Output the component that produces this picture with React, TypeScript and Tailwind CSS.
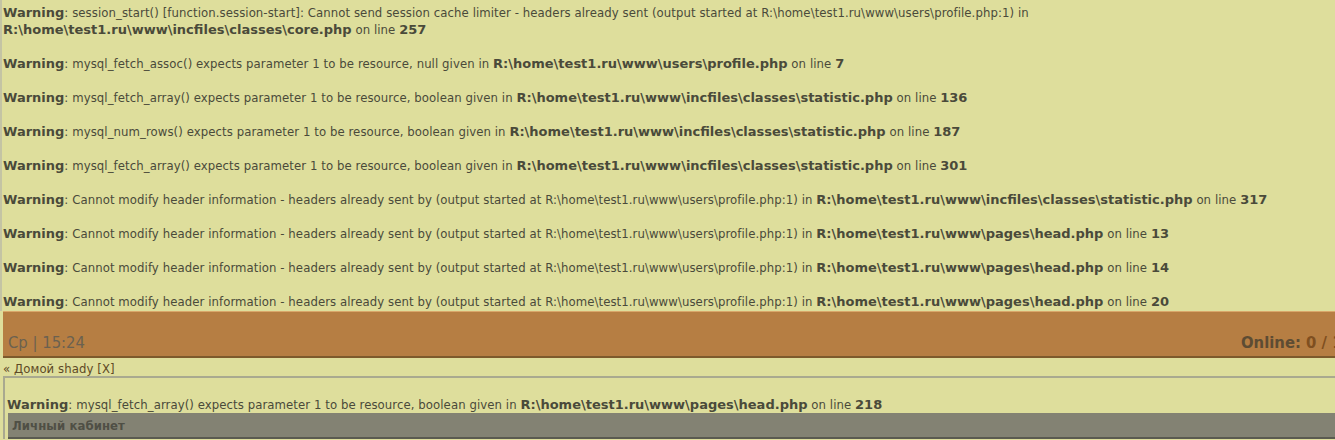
import React from "react";

type W = { msg: string; file: string; line: string };

const warnings: W[] = [
  { msg: "mysql_fetch_assoc() expects parameter 1 to be resource, null given in ", file: "R:\\home\\test1.ru\\www\\users\\profile.php", line: "7" },
  { msg: "mysql_fetch_array() expects parameter 1 to be resource, boolean given in ", file: "R:\\home\\test1.ru\\www\\incfiles\\classes\\statistic.php", line: "136" },
  { msg: "mysql_num_rows() expects parameter 1 to be resource, boolean given in ", file: "R:\\home\\test1.ru\\www\\incfiles\\classes\\statistic.php", line: "187" },
  { msg: "mysql_fetch_array() expects parameter 1 to be resource, boolean given in ", file: "R:\\home\\test1.ru\\www\\incfiles\\classes\\statistic.php", line: "301" },
  { msg: "Cannot modify header information - headers already sent by (output started at R:\\home\\test1.ru\\www\\users\\profile.php:1) in ", file: "R:\\home\\test1.ru\\www\\incfiles\\classes\\statistic.php", line: "317" },
  { msg: "Cannot modify header information - headers already sent by (output started at R:\\home\\test1.ru\\www\\users\\profile.php:1) in ", file: "R:\\home\\test1.ru\\www\\pages\\head.php", line: "13" },
  { msg: "Cannot modify header information - headers already sent by (output started at R:\\home\\test1.ru\\www\\users\\profile.php:1) in ", file: "R:\\home\\test1.ru\\www\\pages\\head.php", line: "14" },
  { msg: "Cannot modify header information - headers already sent by (output started at R:\\home\\test1.ru\\www\\users\\profile.php:1) in ", file: "R:\\home\\test1.ru\\www\\pages\\head.php", line: "20" },
];

const boldFont = { fontFamily: '"DejaVu Sans", sans-serif' };

function B({ children }: { children: React.ReactNode }) {
  return (
    <b className="font-bold tracking-normal" style={boldFont}>
      {children}
    </b>
  );
}

function Warn({ w }: { w: W }) {
  return (
    <div className="whitespace-nowrap">
      <B>Warning</B>: {w.msg}
      <B>{w.file}</B> on line <B>{w.line}</B>
    </div>
  );
}

export default function App() {
  return (
    <div
      className="min-h-[440px] w-[1335px] overflow-hidden bg-[#dede9c] text-[13px] leading-[17px] tracking-[0.08px] text-[#4a4a3a]"
      style={{ fontFamily: '"DejaVu Sans Condensed", "DejaVu Sans", sans-serif' }}
    >
      <div className="border-l-2 border-[#c4c4a4] pl-[1px] pt-[4px] pb-[1px]">
        <div>
          <B>Warning</B>: session_start() [function.session-start]: Cannot send session cache limiter - headers already sent (output started at R:\home\test1.ru\www\users\profile.php:1) in
          <br />
          <B>R:\home\test1.ru\www\incfiles\classes\core.php</B> on line <B>257</B>
        </div>
        {warnings.map((w, i) => (
          <div key={i} className="mt-[17px]">
            <Warn w={w} />
          </div>
        ))}
      </div>
      <div className="ml-[3px] flex h-[47px] items-end justify-between overflow-hidden border-t border-b-2 border-t-[#d9a76a] border-b-[#7d5a2c] bg-[#b67e43] pb-[3px] text-[16.5px] leading-[20px] tracking-normal">
        <div className="pl-[5px] text-[#6b6150]">Ср | 15:24</div>
        <div className="w-[94px] shrink-0 whitespace-nowrap font-bold text-[#5d4c33]">
          Online: <span className="text-[#7f4f20]">0 / 1</span>
        </div>
      </div>
      <div className="flex h-[18px] items-center pl-[3px] pt-[2px] text-[#5e4a26]">« Домой shady [X]</div>
      <div className="ml-[3px] border-l-2 border-t-2 border-[#a9a98f] pt-[18px]">
        <div className="pl-[2px] whitespace-nowrap">
          <B>Warning</B>: mysql_fetch_array() expects parameter 1 to be resource, boolean given in <B>R:\home\test1.ru\www\pages\head.php</B> on line <B>218</B>
        </div>
        <div className="ml-[3px] h-[26px] border-b-2 border-[#5a5a50] bg-[#838273] pl-[4px] pt-[4px] font-bold text-[#4f4f45]">
          Личный кабинет
        </div>
      </div>
    </div>
  );
}
